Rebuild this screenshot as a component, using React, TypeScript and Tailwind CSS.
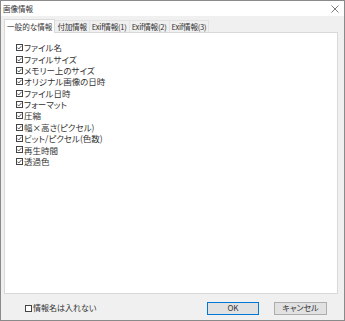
import React from 'react';

const items = [
  'ファイル名',
  'ファイルサイズ',
  'メモリー上のサイズ',
  'オリジナル画像の日時',
  'ファイル日時',
  'フォーマット',
  '圧縮',
  '幅×高さ(ピクセル)',
  'ビット/ピクセル(色数)',
  '再生時間',
  '透過色',
];

const tabs = ['付加情報', 'Exif情報(1)', 'Exif情報(2)', 'Exif情報(3)'];

const Box: React.FC<{ checked?: boolean }> = ({ checked }) => (
  <svg width="7" height="7" viewBox="0 0 7 7" className="shrink-0">
    <rect x="0.5" y="0.5" width="6" height="6" fill="#fff" stroke="#444" />
    {checked && <path d="M1.4 3.6 L2.8 5 L5.6 1.8" fill="none" stroke="#333" strokeWidth="0.8" />}
  </svg>
);

const App: React.FC = () => {
  return (
    <div className="w-[345px] h-[321px] border border-[#8a8a8a] flex flex-col bg-[#f0f0f0] text-[#333] text-[8px] leading-none [font-family:'Noto_Sans_CJK_JP',sans-serif] [font-feature-settings:'palt']">
      {/* title bar */}
      <div className="h-[15px] bg-white flex items-center justify-between pl-[2px] pr-[5px]">
        <span className="text-[7.5px]">画像情報</span>
        <svg width="8" height="8" viewBox="0 0 8 8">
          <path d="M0.5 0.5 L7.5 7.5 M7.5 0.5 L0.5 7.5" stroke="#444" strokeWidth="0.7" />
        </svg>
      </div>

      {/* tabs */}
      <div className="h-[16px] flex items-end pl-[3px] text-[7.6px]">
        <div className="h-[14px] pl-[2px] pr-[2px] flex items-center bg-white border border-b-0 border-[#d9d9d9] relative z-10 -mb-px">
          一般的な情報
        </div>
        {tabs.map((t) => (
          <div key={t} className="h-[12px] px-[2px] flex items-center border-t border-r border-[#e3e3e3] bg-[#f0f0f0] tracking-[-0.25px]">
            {t}
          </div>
        ))}
      </div>

      {/* panel */}
      <div className="h-[262px] ml-[3px] mr-[6px] bg-white border border-[#d9d9d9] pt-[9px] pl-[11px]">
        <div className="flex flex-col text-[8.5px]">
          {items.map((it) => (
            <div key={it} className="h-[11.35px] flex items-center gap-[1px]">
              <Box checked />
              <span>{it}</span>
            </div>
          ))}
        </div>
      </div>

      {/* bottom */}
      <div className="flex-1 flex items-center pl-[24px] pr-[17px] pt-[2px]">
        <div className="flex items-center gap-[1px] flex-1">
          <Box />
          <span>情報名は入れない</span>
        </div>
        <button className="w-[52px] h-[13px] border border-[#0078d7] bg-[#e1e1e1] flex items-center justify-center text-[8px]">
          OK
        </button>
        <button className="ml-[15px] w-[53px] h-[13px] border border-[#adadad] bg-[#e1e1e1] flex items-center justify-center text-[8px]">
          キャンセル
        </button>
      </div>
    </div>
  );
};

export default App;
